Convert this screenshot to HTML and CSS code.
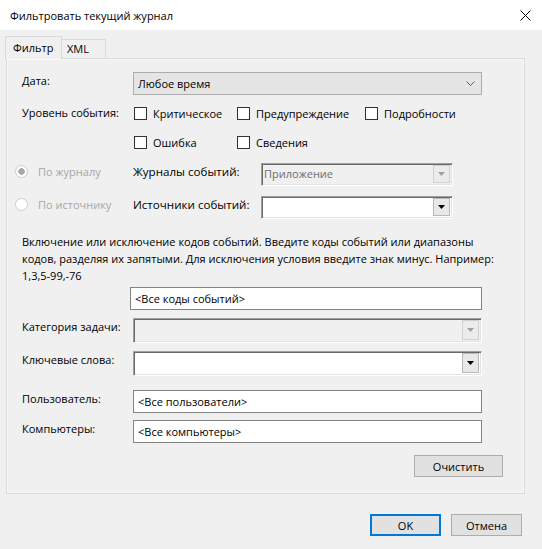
FILE: index.html
```html
<!DOCTYPE html>
<html lang="ru">
<head>
    <meta charset="UTF-8">
    <meta name="viewport" content="width=device-width, initial-scale=1.0">
    <title>Фильтровать текущий журнал</title>
    <link rel="stylesheet" href="styles.css">
</head>
<body>

    <div class="titlebar">
        <span class="title">Фильтровать текущий журнал</span>
        <svg class="close" width="11" height="11" viewBox="0 0 11 11">
            <path d="M0.5 0.5L10.5 10.5M10.5 0.5L0.5 10.5" stroke="#000" stroke-width="1" fill="none"/>
        </svg>
    </div>

    <div class="tabs">
        <div class="tab active">Фильтр</div>
        <div class="tab xml">XML</div>
    </div>

    <div class="panel">
        <div class="row">
            <span class="label">Дата:</span>
            <div class="combo-flat">
                <span>Любое время</span>
                <svg width="9" height="5" viewBox="0 0 9 5"><path d="M0.5 0.5L4.5 4.5L8.5 0.5" stroke="#606060" fill="none"/></svg>
            </div>
        </div>

        <div class="row row-level">
            <span class="label">Уровень события:</span>
            <div class="checks">
                <label class="check"><input type="checkbox">Критическое</label>
                <label class="check"><input type="checkbox">Предупреждение</label>
                <label class="check"><input type="checkbox">Подробности</label>
                <label class="check"><input type="checkbox">Ошибка</label>
                <label class="check"><input type="checkbox">Сведения</label>
            </div>
        </div>

        <div class="row row-source first">
            <label class="radio"><input type="radio" name="by" checked disabled>По журналу</label>
            <span class="source-label">Журналы событий:</span>
            <div class="combo-3d small disabled">
                <span class="value">Приложение</span>
                <span class="drop"><svg width="7" height="4" viewBox="0 0 7 4"><path d="M0 0H7L3.5 4Z" fill="#a0a0a0"/></svg></span>
            </div>
        </div>

        <div class="row row-source">
            <label class="radio"><input type="radio" name="by" disabled>По источнику</label>
            <span class="source-label">Источники событий:</span>
            <div class="combo-3d small">
                <span class="value"></span>
                <span class="drop"><svg width="7" height="4" viewBox="0 0 7 4"><path d="M0 0H7L3.5 4Z" fill="#000"/></svg></span>
            </div>
        </div>

        <p class="hint">Включение или исключение кодов событий. Введите коды событий или диапазоны<br>кодов, разделяя их запятыми. Для исключения условия введите знак минус. Например:<br>1,3,5-99,-76</p>

        <input class="text codes" type="text" value="&lt;Все коды событий&gt;">

        <div class="row row-category">
            <span class="label">Категория задачи:</span>
            <div class="combo-3d wide disabled">
                <span class="value"></span>
                <span class="drop"><svg width="7" height="4" viewBox="0 0 7 4"><path d="M0 0H7L3.5 4Z" fill="#a0a0a0"/></svg></span>
            </div>
        </div>

        <div class="row row-keywords">
            <span class="label">Ключевые слова:</span>
            <div class="combo-3d wide">
                <span class="value"></span>
                <span class="drop"><svg width="7" height="4" viewBox="0 0 7 4"><path d="M0 0H7L3.5 4Z" fill="#000"/></svg></span>
            </div>
        </div>

        <div class="row row-user">
            <span class="label">Пользователь:</span>
            <input class="text" type="text" value="&lt;Все пользователи&gt;">
        </div>

        <div class="row row-computer">
            <span class="label">Компьютеры:</span>
            <input class="text" type="text" value="&lt;Все компьютеры&gt;">
        </div>

        <div class="actions">
            <button class="btn clear">Очистить</button>
        </div>
    </div>

    <div class="footer">
        <button class="btn default">OK</button>
        <button class="btn">Отмена</button>
    </div>

</body>
</html>
```

FILE: styles.css
```css
body {
    margin: 0;
    background: #f0f0f0;
    font-family: "Open Sans", "Noto Sans", sans-serif;
    font-size: 11px;
    color: #000;
}
.titlebar {
    height: 30px;
    background: #fff;
    display: flex;
    align-items: center;
    justify-content: space-between;
    padding: 0 11px 0 10px;
}
.close {
    display: block;
}
.tabs {
    display: flex;
    align-items: flex-end;
    height: 23px;
    margin: 6px 0 -1px 5px;
    position: relative;
}
.tab {
    box-sizing: border-box;
    border: 1px solid #d9d9d9;
    border-bottom: none;
    background: #f0f0f0;
}
.tab.active {
    width: 57px;
    height: 23px;
    padding: 3px 0 0 7px;
}
.tab.xml {
    width: 44px;
    height: 19px;
    margin-bottom: 1px;
    border-left: none;
    padding: 1px 0 0 5px;
}
.panel {
    box-sizing: border-box;
    width: 519px;
    height: 436px;
    margin-left: 6px;
    border: 1px solid #d9d9d9;
    box-shadow: inset 0 0 0 1px #f8f8f8;
    padding: 13px 0 0 15px;
}
.row {
    display: flex;
    align-items: flex-start;
}
.label {
    width: 111px;
    flex: none;
    line-height: 17px;
}
.combo-flat {
    box-sizing: border-box;
    width: 349px;
    height: 23px;
    border: 1px solid #adadad;
    background: #e5e5e5;
    display: flex;
    align-items: center;
    justify-content: space-between;
    padding: 0 6px 0 4px;
}
.row-level {
    margin-top: 8px;
}
.row-level .label {
    line-height: 20px;
}
.checks {
    display: grid;
    grid-template-columns: 103px 128px auto;
    grid-auto-rows: 20px;
    row-gap: 9px;
    margin-left: 1px;
}
.check {
    display: flex;
    align-items: center;
    gap: 6px;
}
.check input {
    appearance: none;
    width: 13px;
    height: 13px;
    margin: 0;
    border: 1px solid #333;
    background: #fff;
}
.row-source {
    height: 23px;
    margin: 10px 0 0 -7px;
}
.row-source.first {
    margin-top: 11px;
}
.radio {
    width: 118px;
    flex: none;
    display: flex;
    align-items: center;
    gap: 10px;
    line-height: 17px;
    color: #a6a6a6;
}
.radio input {
    appearance: none;
    width: 13px;
    height: 13px;
    margin: 0;
    border: 1px solid #cccccc;
    border-radius: 50%;
    background: #fff;
}
.radio input:checked {
    background: radial-gradient(circle, #a8a8a8 0 3px, #fff 3.5px);
}
.source-label {
    width: 128px;
    flex: none;
    font-size: 11.6px;
    line-height: 18px;
}
.combo-3d {
    box-sizing: border-box;
    display: flex;
    align-items: stretch;
    background: #fff;
    border-top: 1px solid #a0a0a0;
    border-left: 1px solid #a0a0a0;
    border-bottom: 1px solid #fff;
    border-right: 1px solid #fff;
    box-shadow: inset 1px 1px 0 #696969, inset -1px -1px 0 #e3e3e3;
    padding: 1px 2px 2px 2px;
}
.combo-3d.disabled {
    background: #f0f0f0;
}
.combo-3d.small {
    width: 192px;
    height: 23px;
}
.combo-3d.wide {
    width: 349px;
    height: 25px;
}
.value {
    flex: 1;
    line-height: 17px;
    color: #6d6d6d;
}
.drop {
    width: 17px;
    box-sizing: border-box;
    border: 1px solid #b9b9b9;
    background: #e8e8e8;
    display: flex;
    align-items: center;
    justify-content: center;
}
.disabled .drop {
    border-color: #d0d0d0;
    background: #ececec;
}
.hint {
    margin: 14px 0 0;
    line-height: 17px;
}
.text {
    box-sizing: border-box;
    width: 349px;
    height: 23px;
    margin: 0;
    border: 1px solid #828282;
    background: #fff;
    padding: 0 4px;
    font: inherit;
    color: #000;
}
.codes {
    display: block;
    width: 352px;
    margin: 3px 0 0 108px;
}
.row-category {
    margin-top: 8px;
}
.row-keywords {
    margin-top: 8px;
}
.row-user {
    margin-top: 14px;
}
.row-computer {
    margin-top: 7px;
}
.actions {
    display: flex;
    justify-content: flex-end;
    margin: 12px 21px 0 0;
}
.btn {
    box-sizing: border-box;
    width: 71px;
    height: 22px;
    padding: 0;
    border: 1px solid #adadad;
    background: #e1e1e1;
    font: inherit;
    color: #000;
}
.btn.clear {
    width: 89px;
}
.btn.default {
    border: 2px solid #0078d7;
}
.footer {
    display: flex;
    justify-content: flex-end;
    gap: 10px;
    margin-top: 20px;
    padding-right: 20px;
}
```
